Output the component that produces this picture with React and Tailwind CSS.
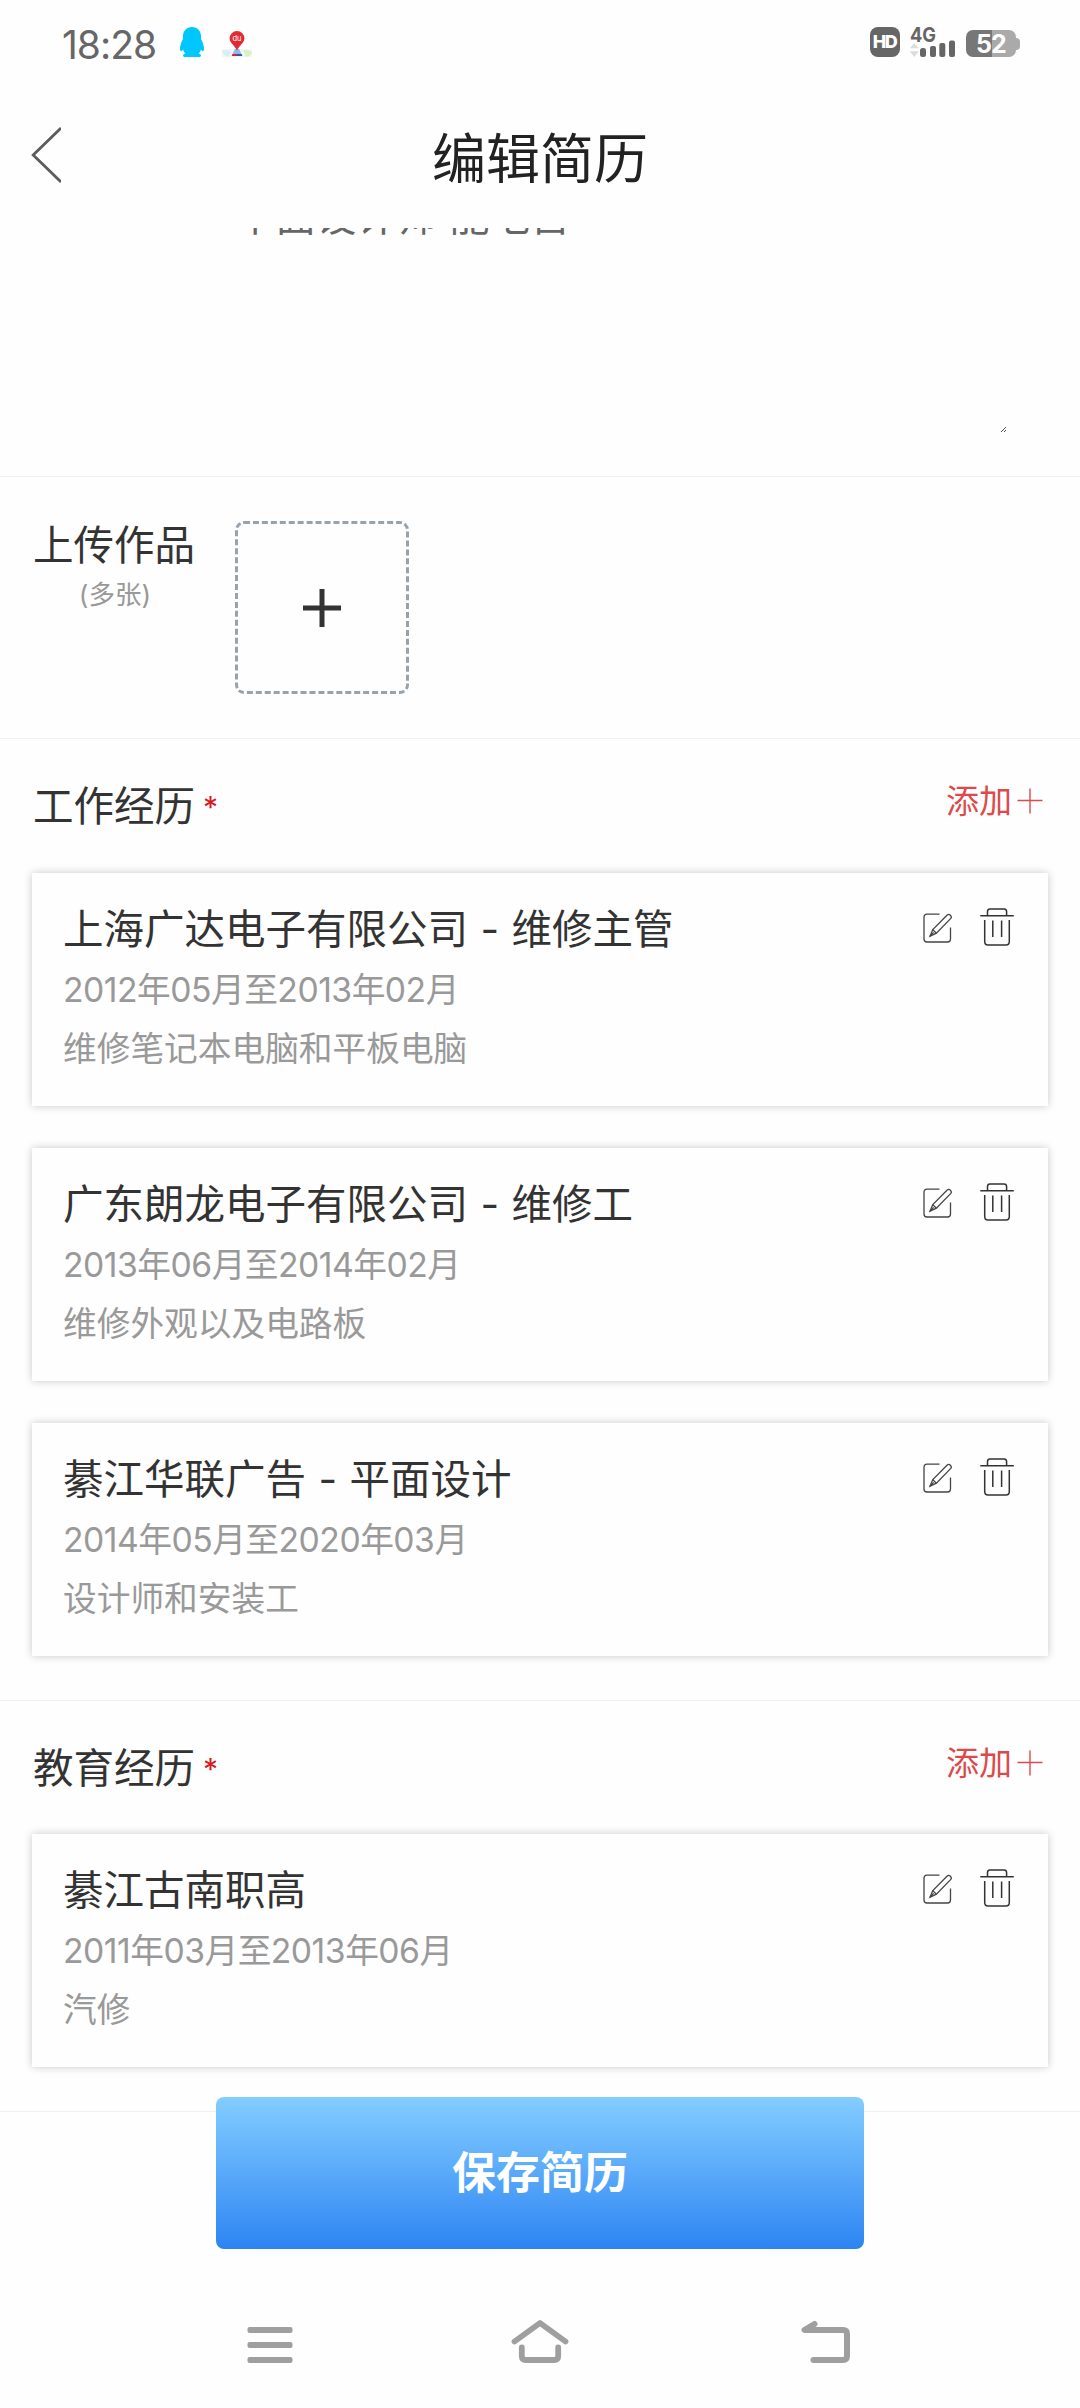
import { useState } from "react";

const WORK = [
    {
        id: 1,
        title: "上海广达电子有限公司 - 维修主管",
        period: "2012年05月至2013年02月",
        desc: "维修笔记本电脑和平板电脑",
    },
    {
        id: 2,
        title: "广东朗龙电子有限公司 - 维修工",
        period: "2013年06月至2014年02月",
        desc: "维修外观以及电路板",
    },
    {
        id: 3,
        title: "綦江华联广告 - 平面设计",
        period: "2014年05月至2020年03月",
        desc: "设计师和安装工",
    },
];

const EDUCATION = [
    {
        id: 1,
        title: "綦江古南职高",
        period: "2011年03月至2013年06月",
        desc: "汽修",
    },
];

function EditIcon() {
    return (
        <svg width="30" height="30" viewBox="0 0 30 30" fill="none" stroke="#444" strokeWidth="1.3">
            <path d="M16.5 1.2H4Q1 1.2 1 4.2V26Q1 29 4 29H24.5Q27.5 29 27.5 26V14.5" />
            <path d="M7 23.2L9.8 16.6L24.2 2Q25.8 0.7 27.4 2.2Q29 3.8 27.8 5.4L13.4 20.2L7 23.2Z" />
            <path d="M9.8 16.6L13.4 20.2M7 23.2L10.6 19.4" />
        </svg>
    );
}

function TrashIcon() {
    return (
        <svg width="34" height="38" viewBox="0 0 34 38" fill="none" stroke="#333" strokeWidth="1.5">
            <path d="M0.3 7.7H33.8" />
            <path d="M7.5 7.5V3.5Q7.5 0.9 10 0.9H24Q26.6 0.9 26.6 3.5V7.5" />
            <path d="M4.7 12V33.5Q4.7 37 8 37H26Q29.3 37 29.3 33.5V12" />
            <path d="M12.8 12.5V29M21.6 12.5V29" />
        </svg>
    );
}

function StatusBar() {
    return (
        <div className="h-[84px] flex items-start justify-between pl-[62px] pr-[60px] pt-[27px]">
            <div className="flex items-start">
                <span className="w-[117px] text-[39px] leading-[35px] tracking-[-1px] text-[#666]">18:28</span>
                {/* QQ */}
                <svg width="26" height="30" viewBox="0 0 26 30" fill="#00c8ff">
                    <path d="M13 0C7.5 0 4 4 4 9V12C2.3 15 1 18.5 1 21.5C1 23.5 1.5 24.5 2.2 24.2L4.2 22.8C4.6 24.4 5.4 25.6 6.4 26.6C4.8 27 4 27.8 4 28.7C4 30 7 30 9 30H17C19 30 22 30 22 28.7C22 27.8 21.2 27 19.6 26.6C20.6 25.6 21.4 24.4 21.8 22.8L23.8 24.2C24.5 24.5 25 23.5 25 21.5C25 18.5 23.7 15 22 12V9C22 4 18.5 0 13 0Z" />
                </svg>
                {/* Baidu map */}
                <svg className="ml-[17px]" width="30" height="30" viewBox="0 0 30 30">
                    <rect x="0" y="22" width="30" height="8" fill="#f2f5f5" />
                    <path d="M0 24Q6 22 9 25L6 30Q1 28 0 24Z" fill="#d5edf7" />
                    <path d="M21 23Q28 23 30 25Q29 29 24 30Z" fill="#d9efc4" />
                    <path d="M13 22H17L20.5 29H9.5Z" fill="#8fb8ea" />
                    <path d="M10.6 27H15V29H9.8Z" fill="#d81f3c" />
                    <path d="M15 27H19.5L20.3 29H15Z" fill="#2d55b5" />
                    <path d="M15 4A7.4 7.4 0 0 1 22.4 11.5C22.4 16 17 18.5 15 23.5C13 18.5 7.6 16 7.6 11.5A7.4 7.4 0 0 1 15 4Z" fill="#e02a35" />
                    <text x="15" y="14" fontSize="7.5" fill="#fff" textAnchor="middle">du</text>
                </svg>
            </div>
            <div className="flex items-start">
                <div className="w-[30px] h-[30px] rounded-[8px] bg-[#666] text-white text-[18px] leading-[30px] tracking-[-1.5px] indent-[-1px] font-extrabold text-center">
                    HD
                </div>
                <svg className="ml-[9px] -mt-[10px]" width="48" height="40" viewBox="0 -10 48 40">
                    <text x="1" y="14.6" fontSize="20.5" fontWeight="700" fill="#666" textLength="26" lengthAdjust="spacingAndGlyphs">4G</text>
                    <path d="M5.2 16.2L9.8 21.3H0.8ZM5.2 30L9.8 24.3H0.8Z" fill="#dcdcdc" />
                    <g fill="#666">
                        <rect x="11" y="21" width="6" height="9" rx="2.5" />
                        <rect x="21" y="19" width="6" height="11" rx="2" />
                        <rect x="30.3" y="16" width="6" height="14" rx="2" />
                        <rect x="40" y="13.5" width="6" height="16.5" rx="2" />
                    </g>
                </svg>
                <div className="ml-[9px] mt-[3px] flex items-center">
                    <div className="w-[50px] h-[27px] rounded-[7px] bg-linear-to-r from-[#777] from-53% to-[#aaa] to-53% text-white text-[25px] leading-[28px] tracking-[-0.8px] font-bold text-center">
                        52
                    </div>
                    <div className="w-[4px] h-[12px] rounded-r-[4px] bg-[#aaa]" />
                </div>
            </div>
        </div>
    );
}

function RecordCard({ record }) {
    return (
        <div className="h-[233px] flex justify-between pl-[31px] pr-[34px] pt-[26px] bg-[#fefefe] shadow-[0_0_8px_rgba(0,0,0,0.22)]">
            <div>
                <h3 className="text-[40.5px] leading-[61px] text-[#333] [word-spacing:1px]">{record.title}</h3>
                <p className="text-[33.7px] leading-[60px] text-[#999] tracking-[-0.5px]">{record.period}</p>
                <p className="text-[33.7px] leading-[58px] text-[#999]">{record.desc}</p>
            </div>
            <div className="flex items-start gap-[27px] pt-[9px]">
                <button className="pt-[5px]">
                    <EditIcon />
                </button>
                <button>
                    <TrashIcon />
                </button>
            </div>
        </div>
    );
}

function RecordSection({ title, records }) {
    return (
        <section className="px-8 pb-[44px] border-b border-[#f0f0f0]">
            <div className="h-[133.5px] flex items-start justify-between">
                <div className="flex items-start mt-[38px] ml-px leading-[60px]">
                    <h2 className="text-[40.5px] text-[#333]">{title}</h2>
                    <span className="ml-[8px] text-[30px] text-[#d9191f]">*</span>
                </div>
                <button className="mt-[32px] mr-[5px] flex items-center gap-[5px] text-[33px] leading-[60px] text-[#dc4a4c]">
                    添加
                    <svg width="26" height="26" viewBox="0 0 26 26" stroke="#dc4a4c" strokeWidth="1.4">
                        <path d="M0.5 12.5H25.5M13 0.5V25.5" />
                    </svg>
                </button>
            </div>
            <div className="flex flex-col gap-[42px]">
                {records.map((record) => (
                    <RecordCard key={record.id} record={record} />
                ))}
            </div>
        </section>
    );
}

export default function App() {
    const [intro, setIntro] = useState("平面设计师 能吃苦");

    return (
        <div className="relative w-[1080px] h-[2408px] flex flex-col overflow-hidden bg-[#fefefe] font-['Inter','Noto_Sans_CJK_SC',sans-serif]">
            <StatusBar />

            {/* Header */}
            <header className="h-[144px] flex items-start pl-[31px] pr-[31px]">
                <button className="mt-[43px]">
                    <svg width="30" height="56" viewBox="0 0 30 56" fill="none" stroke="#5c5c5c" strokeWidth="2.8">
                        <path d="M30 1L2.2 28L30 55" />
                    </svg>
                </button>
                <h1 className="flex-1 mr-[30px] mt-[46px] text-center text-[54px] leading-[60px] text-[#222]">编辑简历</h1>
            </header>

            {/* Scrolled form */}
            <main className="flex-1 overflow-hidden">
                <div className="h-[249px] flow-root pl-[235px] pr-[73px] border-b border-[#f0f0f0]">
                    <textarea
                        value={intro}
                        onChange={(e) => setIntro(e.target.value)}
                        className="block w-full h-[237px] -mt-[39px] resize-none overflow-hidden text-[40.5px] leading-[56px] text-[#666]"
                    />
                    <svg className="ml-auto" width="7" height="7" viewBox="0 0 7 7" stroke="#555" strokeWidth="1">
                        <path d="M1 6L6 1M4 6L6 4" />
                    </svg>
                </div>

                <div className="h-[262px] flex items-start pl-[33px] pt-[44px] border-b border-[#f0f0f0]">
                    <div className="w-[202px] pt-px">
                        <div className="text-[40.5px] leading-[48px] text-[#333]">上传作品</div>
                        <div className="w-[164px] text-center text-[26.5px] leading-[49px] text-[#999]">(多张)</div>
                    </div>
                    <button className="w-[174px] h-[173px] flex items-center justify-center rounded-[9px] border-3 border-dashed border-[#98a2ab]">
                        <svg width="38" height="38" viewBox="0 0 38 38" stroke="#333" strokeWidth="5">
                            <path d="M0 19H38M19 0V38" />
                        </svg>
                    </button>
                </div>

                <RecordSection title="工作经历" records={WORK} />
                <RecordSection title="教育经历" records={EDUCATION} />
            </main>

            {/* Save button floats over the form */}
            <button className="absolute left-[216px] top-[2097px] w-[648px] h-[152px] rounded-[8px] bg-linear-to-b from-[#83cdff] to-[#2c84f2] text-white text-[44px] font-bold">
                保存简历
            </button>

            {/* System navigation */}
            <nav className="h-[126px] flex items-start pl-[247px] pt-[36px] text-[#9f9f9f]">
                <svg width="46" height="48" viewBox="0 0 46 48" fill="currentColor">
                    <rect x="0.5" y="9" width="45" height="6" rx="2" />
                    <rect x="0.5" y="24" width="45" height="6" rx="2" />
                    <rect x="0.5" y="39" width="45" height="6" rx="2" />
                </svg>
                <svg className="ml-[218px]" width="58" height="48" viewBox="0 0 58 48" fill="none" stroke="currentColor" strokeWidth="5.8" strokeLinecap="round" strokeLinejoin="round">
                    <path d="M3.5 23.5L29 5L54.5 23.5" />
                    <path d="M10.8 29.5V38Q10.8 42 14.8 42H43.2Q47.2 42 47.2 38V29.5" />
                </svg>
                <svg className="ml-[232px]" width="49" height="48" viewBox="0 0 49 48" fill="none" stroke="currentColor" strokeWidth="6" strokeLinejoin="round" strokeLinecap="round">
                    <path d="M13.5 6L3.5 12H42Q46 12 46 16V38Q46 42 42 42H12.5" />
                </svg>
            </nav>
        </div>
    );
}
